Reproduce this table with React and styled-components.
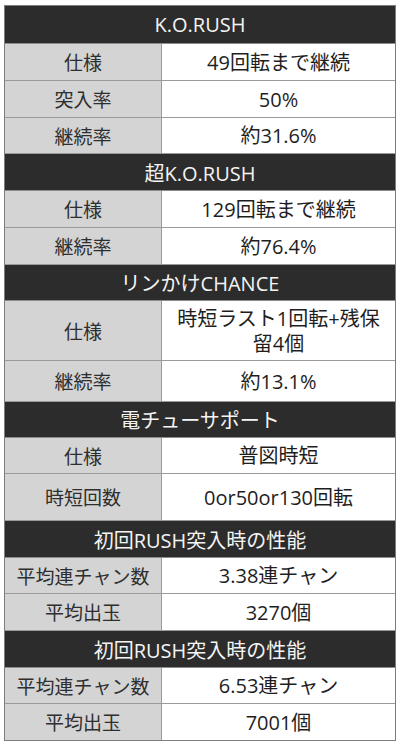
import styled, { createGlobalStyle } from 'styled-components';

/*################*/
/*#### STYLES ####*/
/*################*/

const GlobalStyle = createGlobalStyle`
  html, body {
    margin: 0;
    padding: 0;
    background: #ffffff;
  }
  body {
    font-family: "Open Sans", "Noto Sans CJK JP", sans-serif;
  }
`;

const Page = styled.div`
  width: 400px;
  padding: 5px 4px 5px 4px;
  box-sizing: border-box;
`;

const Table = styled.div`
  display: flex;
  flex-direction: column;
  border: 1px solid #7d7d7d;
  background: #ffffff;
`;

const Header = styled.div`
  height: ${(props) => props.h}px;
  display: flex;
  align-items: center;
  justify-content: center;
  background-color: #2c2c2c;
  color: #f4f4f4;
  font-size: 20px;
  border-bottom: 1px solid #8c8c8c;
  box-sizing: border-box;
`;

const Row = styled.div`
  height: ${(props) => props.h}px;
  display: grid;
  grid-template-columns: 157px 1fr;
  border-bottom: 1px solid #9a9a9a;
  box-sizing: border-box;

  &:last-child {
    border-bottom: none;
  }
`;

const Label = styled.div`
  display: flex;
  align-items: center;
  justify-content: center;
  background-color: #d4d4d4;
  color: #2e2e2e;
  font-size: 19px;
  border-right: 1px solid #9a9a9a;
`;

const Value = styled.div`
  display: flex;
  align-items: center;
  justify-content: center;
  text-align: center;
  color: #1e1e1e;
  font-size: 20px;
  line-height: 25px;
`;

/*##############*/
/*#### DATA ####*/
/*##############*/

const sections = [
  {
    title: 'K.O.RUSH',
    h: 38,
    rows: [
      ['仕様', '49回転まで継続', 37],
      ['突入率', '50%', 37],
      ['継続率', '約31.6%', 36],
    ],
  },
  {
    title: '超K.O.RUSH',
    h: 37,
    rows: [
      ['仕様', '129回転まで継続', 37],
      ['継続率', '約76.4%', 37],
    ],
  },
  {
    title: 'リンかけCHANCE',
    h: 36,
    rows: [
      ['仕様', ['時短ラスト1回転+残保', '留4個'], 60],
      ['継続率', '約13.1%', 41],
    ],
  },
  {
    title: '電チューサポート',
    h: 36,
    rows: [
      ['仕様', '普図時短', 36],
      ['時短回数', '0or50or130回転', 47],
    ],
  },
  {
    title: '初回RUSH突入時の性能',
    h: 37,
    rows: [
      ['平均連チャン数', '3.38連チャン', 36],
      ['平均出玉', '3270個', 37],
    ],
  },
  {
    title: '初回RUSH突入時の性能',
    h: 37,
    rows: [
      ['平均連チャン数', '6.53連チャン', 36],
      ['平均出玉', '7001個', 36],
    ],
  },
];

/*###################*/
/*#### COMPONENT ####*/
/*###################*/

const App = () => {
  return (
    <>
      <GlobalStyle />
      <Page>
        <Table>
          {sections.map((section, i) => [
            <Header key={`h${i}`} h={section.h}>
              {section.title}
            </Header>,
            ...section.rows.map(([label, value, h], j) => (
              <Row key={`r${i}-${j}`} h={h}>
                <Label>{label}</Label>
                <Value>
                  {Array.isArray(value) ? (
                    <span>
                      {value[0]}
                      <br />
                      {value[1]}
                    </span>
                  ) : (
                    value
                  )}
                </Value>
              </Row>
            )),
          ])}
        </Table>
      </Page>
    </>
  );
};

export default App;
